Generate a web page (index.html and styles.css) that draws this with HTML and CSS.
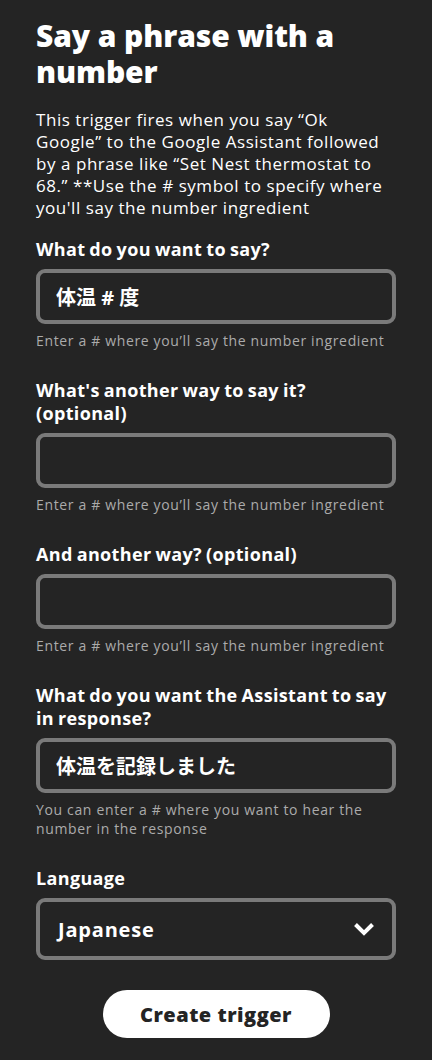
FILE: index.html
```html
<!DOCTYPE html>
<html lang="en">
<head>
  <meta charset="UTF-8" />
  <meta name="viewport" content="width=device-width, initial-scale=1.0"/>
  <title>Say a phrase with a number</title>
  <link rel="stylesheet" href="styles.css">
</head>
<body>
  <div class="page">
    <h1 class="title">Say a phrase with a number</h1>
    <p class="intro">This trigger fires when you say “Ok Google” to the Google Assistant followed by a phrase like “Set Nest thermostat to 68.” **Use the # symbol to specify where you'll say the number ingredient</p>

    <!-- fields -->
    <div class="field">
      <label class="label">What do you want to say?</label>
      <div class="box"><input class="box-input" type="text" value="体温 # 度"></div>
      <div class="hint">Enter a # where you’ll say the number ingredient</div>
    </div>

    <div class="field">
      <label class="label">What's another way to say it? (optional)</label>
      <div class="box"><input class="box-input" type="text" value=""></div>
      <div class="hint">Enter a # where you’ll say the number ingredient</div>
    </div>

    <div class="field">
      <label class="label">And another way? (optional)</label>
      <div class="box"><input class="box-input" type="text" value=""></div>
      <div class="hint">Enter a # where you’ll say the number ingredient</div>
    </div>

    <div class="field">
      <label class="label">What do you want the Assistant to say in response?</label>
      <div class="box"><input class="box-input" type="text" value="体温を記録しました"></div>
      <div class="hint">You can enter a # where you want to hear the number in the response</div>
    </div>

    <div class="field">
      <label class="label">Language</label>
      <div class="box select">
        <span class="select-value">Japanese</span>
        <svg class="chevron" width="22" height="14" viewBox="0 0 22 14">
          <path d="M2.5 2.5 L11 11 L19.5 2.5" fill="none" stroke="#fff" stroke-width="4"/>
        </svg>
      </div>
    </div>

    <div class="actions">
      <button class="create-btn">Create trigger</button>
    </div>
  </div>
</body>
</html>
```

FILE: styles.css
```css
body {
  margin: 0;
  background: #242424;
  color: #ffffff;
  font-family: "Open Sans", "Noto Sans CJK JP", sans-serif;
}

.page {
  padding: 18px 36px 21px 36px;
}

.title {
  margin: 0;
  font-size: 30px;
  line-height: 36px;
  font-weight: 800;
  letter-spacing: -0.1px;
}

.intro {
  margin: 19px 0 0 0;
  font-size: 17px;
  line-height: 22px;
  letter-spacing: 0.55px;
}

.field {
  margin-top: 29px;
}

.intro + .field {
  margin-top: 19px;
}

.label {
  display: block;
  font-size: 18px;
  line-height: 23px;
  font-weight: 700;
  letter-spacing: 0.35px;
  word-spacing: -1px;
  margin-bottom: 8px;
}

.box {
  box-sizing: border-box;
  height: 55px;
  border: 4px solid #7a7a7a;
  border-radius: 9px;
  display: flex;
  align-items: center;
}

.box-input {
  width: 100%;
  border: none;
  background: transparent;
  color: #ffffff;
  font: 700 20px "Open Sans", "Noto Sans CJK JP", sans-serif;
  padding: 0 16px;
  outline: none;
}

.hint {
  margin-top: 7px;
  font-size: 14px;
  line-height: 19px;
  letter-spacing: 0.65px;
  color: #ababab;
}

.select {
  height: 62px;
  padding: 0 17px 0 18px;
  justify-content: space-between;
}

.select-value {
  font-size: 20px;
  font-weight: 700;
  letter-spacing: 0.8px;
}

.actions {
  display: flex;
  justify-content: center;
  margin-top: 30px;
}

.create-btn {
  width: 227px;
  height: 48px;
  border: none;
  border-radius: 24px;
  background: #ffffff;
  color: #242424;
  font: 800 20px "Open Sans", sans-serif;
  letter-spacing: 0.5px;
  cursor: pointer;
}
```
